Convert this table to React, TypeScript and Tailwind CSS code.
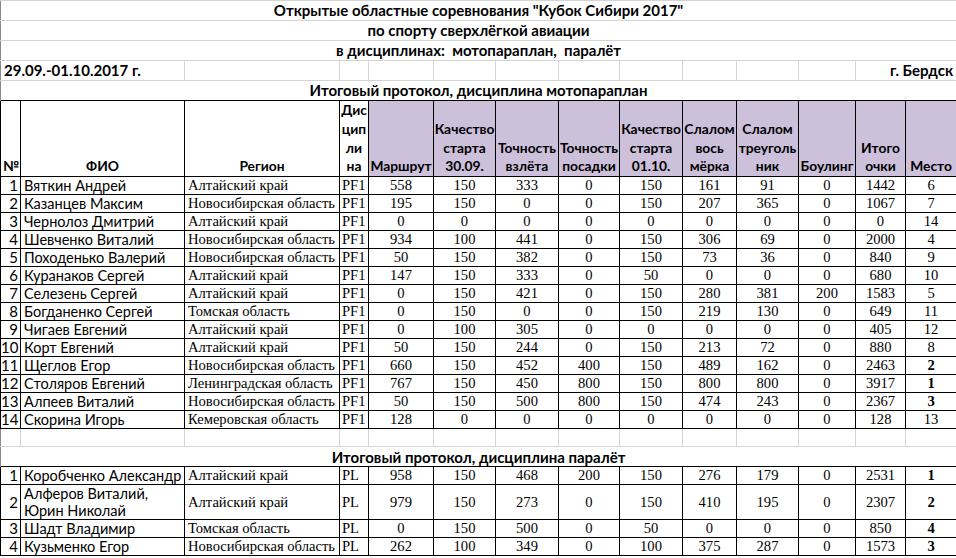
import React from 'react'

const widths = [20, 164, 155, 29, 65, 62, 63, 61, 63, 54, 62, 57, 50, 51]

type Row = {
  n: number
  name: string[]
  region: string
  disc: string
  vals: number[]
  place: number
  bold?: boolean
}

const moto: Row[] = [
  { n: 1, name: ['Вяткин Андрей'], region: 'Алтайский край', disc: 'PF1', vals: [558, 150, 333, 0, 150, 161, 91, 0, 1442], place: 6 },
  { n: 2, name: ['Казанцев Максим'], region: 'Новосибирская область', disc: 'PF1', vals: [195, 150, 0, 0, 150, 207, 365, 0, 1067], place: 7 },
  { n: 3, name: ['Чернолоз Дмитрий'], region: 'Алтайский край', disc: 'PF1', vals: [0, 0, 0, 0, 0, 0, 0, 0, 0], place: 14 },
  { n: 4, name: ['Шевченко Виталий'], region: 'Новосибирская область', disc: 'PF1', vals: [934, 100, 441, 0, 150, 306, 69, 0, 2000], place: 4 },
  { n: 5, name: ['Походенько Валерий'], region: 'Новосибирская область', disc: 'PF1', vals: [50, 150, 382, 0, 150, 73, 36, 0, 840], place: 9 },
  { n: 6, name: ['Куранаков Сергей'], region: 'Алтайский край', disc: 'PF1', vals: [147, 150, 333, 0, 50, 0, 0, 0, 680], place: 10 },
  { n: 7, name: ['Селезень Сергей'], region: 'Алтайский край', disc: 'PF1', vals: [0, 150, 421, 0, 150, 280, 381, 200, 1583], place: 5 },
  { n: 8, name: ['Богданенко Сергей'], region: 'Томская область', disc: 'PF1', vals: [0, 150, 0, 0, 150, 219, 130, 0, 649], place: 11 },
  { n: 9, name: ['Чигаев Евгений'], region: 'Алтайский край', disc: 'PF1', vals: [0, 100, 305, 0, 0, 0, 0, 0, 405], place: 12 },
  { n: 10, name: ['Корт Евгений'], region: 'Алтайский край', disc: 'PF1', vals: [50, 150, 244, 0, 150, 213, 72, 0, 880], place: 8 },
  { n: 11, name: ['Щеглов Егор'], region: 'Новосибирская область', disc: 'PF1', vals: [660, 150, 452, 400, 150, 489, 162, 0, 2463], place: 2, bold: true },
  { n: 12, name: ['Столяров Евгений'], region: 'Ленинградская область', disc: 'PF1', vals: [767, 150, 450, 800, 150, 800, 800, 0, 3917], place: 1, bold: true },
  { n: 13, name: ['Алпеев Виталий'], region: 'Новосибирская область', disc: 'PF1', vals: [50, 150, 500, 800, 150, 474, 243, 0, 2367], place: 3, bold: true },
  { n: 14, name: ['Скорина Игорь'], region: 'Кемеровская область', disc: 'PF1', vals: [128, 0, 0, 0, 0, 0, 0, 0, 128], place: 13 },
]

const paralet: Row[] = [
  { n: 1, name: ['Коробченко Александр'], region: 'Алтайский край', disc: 'PL', vals: [958, 150, 468, 200, 150, 276, 179, 0, 2531], place: 1, bold: true },
  { n: 2, name: ['Алферов Виталий,', 'Юрин Николай'], region: 'Алтайский край', disc: 'PL', vals: [979, 150, 273, 0, 150, 410, 195, 0, 2307], place: 2, bold: true },
  { n: 3, name: ['Шадт Владимир'], region: 'Томская область', disc: 'PL', vals: [0, 150, 500, 0, 50, 0, 0, 0, 850], place: 4, bold: true },
  { n: 4, name: ['Кузьменко Егор'], region: 'Новосибирская область', disc: 'PL', vals: [262, 100, 349, 0, 100, 375, 287, 0, 1573], place: 3, bold: true },
]

const headers: string[][] = [
  ['Маршрут'],
  ['Качество', 'старта', '30.09.'],
  ['Точность', 'взлёта'],
  ['Точность', 'посадки'],
  ['Качество', 'старта', '01.10.'],
  ['Слалом', 'вось', 'мёрка'],
  ['Слалом', 'треуголь', 'ник'],
  ['Боулинг'],
  ['Итого', 'очки'],
  ['Место'],
]

const sans = "font-['Lato','Liberation_Sans',sans-serif]"
const serif = "font-['Liberation_Serif','Times_New_Roman',serif] text-[14.6px]"

function DataRow({ row }: { row: Row }) {
  const tall = row.name.length > 1
  return (
    <tr className={tall ? 'h-[35px]' : 'h-[17px]'}>
      <td className={`p-0 pr-[2px] border border-black text-right align-middle ${sans}`}>{row.n}</td>
      <td className={`p-0 pl-[3px] border border-black align-middle whitespace-nowrap overflow-hidden text-[14.5px] ${sans} leading-[17px]`}>
        {row.name.map((l, i) => (
          <div key={i}>{l}</div>
        ))}
      </td>
      <td className={`p-0 pl-[3px] border border-black align-middle whitespace-nowrap overflow-hidden ${serif}`}>{row.region}</td>
      <td className={`p-0 pl-[2px] border border-black align-middle ${serif}`}>{row.disc}</td>
      {row.vals.map((v, i) => (
        <td key={i} className={`p-0 border border-black text-center align-middle ${serif}`}>
          {v}
        </td>
      ))}
      <td className={`p-0 border border-black text-center align-middle ${serif} ${row.bold ? 'font-bold' : ''}`}>{row.place}</td>
    </tr>
  )
}

export default function App() {
  const grid = 'border-[#d4d4d4]'
  const head = `p-0 border border-black align-bottom text-center font-bold leading-[18.75px] whitespace-nowrap text-[13.8px] ${sans}`
  return (
    <div className="w-[956px] h-[558px] overflow-hidden bg-white text-black text-[15px] leading-[17px]">
      <table className="table-fixed border-collapse w-[956px]">
        <colgroup>
          {widths.map((w, i) => (
            <col key={i} style={{ width: w }} />
          ))}
        </colgroup>
        <tbody>
          <tr className="h-[20px]">
            <td colSpan={14} className={`p-0 border ${grid} border-l-[#8a8a8a] text-center font-bold ${sans}`}>
              Открытые областные соревнования "Кубок Сибири 2017"
            </td>
          </tr>
          <tr className="h-[20px]">
            <td colSpan={14} className={`p-0 border ${grid} border-l-[#8a8a8a] text-center font-bold ${sans}`}>
              по спорту сверхлёгкой авиации
            </td>
          </tr>
          <tr className="h-[20px]">
            <td colSpan={14} className={`p-0 border ${grid} border-l-[#8a8a8a] text-center font-bold whitespace-pre ${sans}`}>
              {'в дисциплинах:  мотопараплан,  паралёт'}
            </td>
          </tr>
          <tr className="h-[20px]">
            <td colSpan={2} className={`p-0 pl-[3px] border ${grid} border-l-[#8a8a8a] font-bold whitespace-nowrap ${sans}`}>
              29.09.-01.10.2017 г.
            </td>
            {[0, 1, 2, 3, 4, 5, 6, 7, 8, 9].map((i) => (
              <td key={i} className={`p-0 border ${grid}`}></td>
            ))}
            <td colSpan={2} className={`p-0 pr-[3px] border ${grid} text-right font-bold ${sans}`}>
              г. Бердск
            </td>
          </tr>
          <tr className="h-[20px]">
            <td colSpan={14} className={`p-0 border ${grid} border-b-0 border-l-[#8a8a8a] text-center font-bold ${sans}`}>
              Итоговый протокол, дисциплина мотопараплан
            </td>
          </tr>
          <tr className="h-[75px]">
            <td className={`${head} text-left pl-[2px]`}>№</td>
            <td className={head}>ФИО</td>
            <td className={head}>Регион</td>
            <td className={head}>
              <div>Дис</div>
              <div>цип</div>
              <div>ли</div>
              <div>на</div>
            </td>
            {headers.map((h, i) => (
              <td key={i} className={`${head} bg-[#ccc0da]`}>
                {h.map((l, j) => (
                  <div key={j}>{l}</div>
                ))}
              </td>
            ))}
          </tr>
          {moto.map((r) => (
            <DataRow key={r.n} row={r} />
          ))}
          <tr className="h-[18px]">
            {widths.map((_, i) => (
              <td key={i} className={`p-0 border ${grid} border-t-black ${i === 0 ? 'border-l-[#8a8a8a]' : ''}`}></td>
            ))}
          </tr>
          <tr className="h-[20px]">
            <td colSpan={14} className={`p-0 border ${grid} border-b-0 border-l-[#8a8a8a] text-center align-bottom font-bold ${sans}`}>
              Итоговый протокол, дисциплина паралёт
            </td>
          </tr>
          {paralet.map((r) => (
            <DataRow key={r.n} row={r} />
          ))}
        </tbody>
      </table>
    </div>
  )
}
